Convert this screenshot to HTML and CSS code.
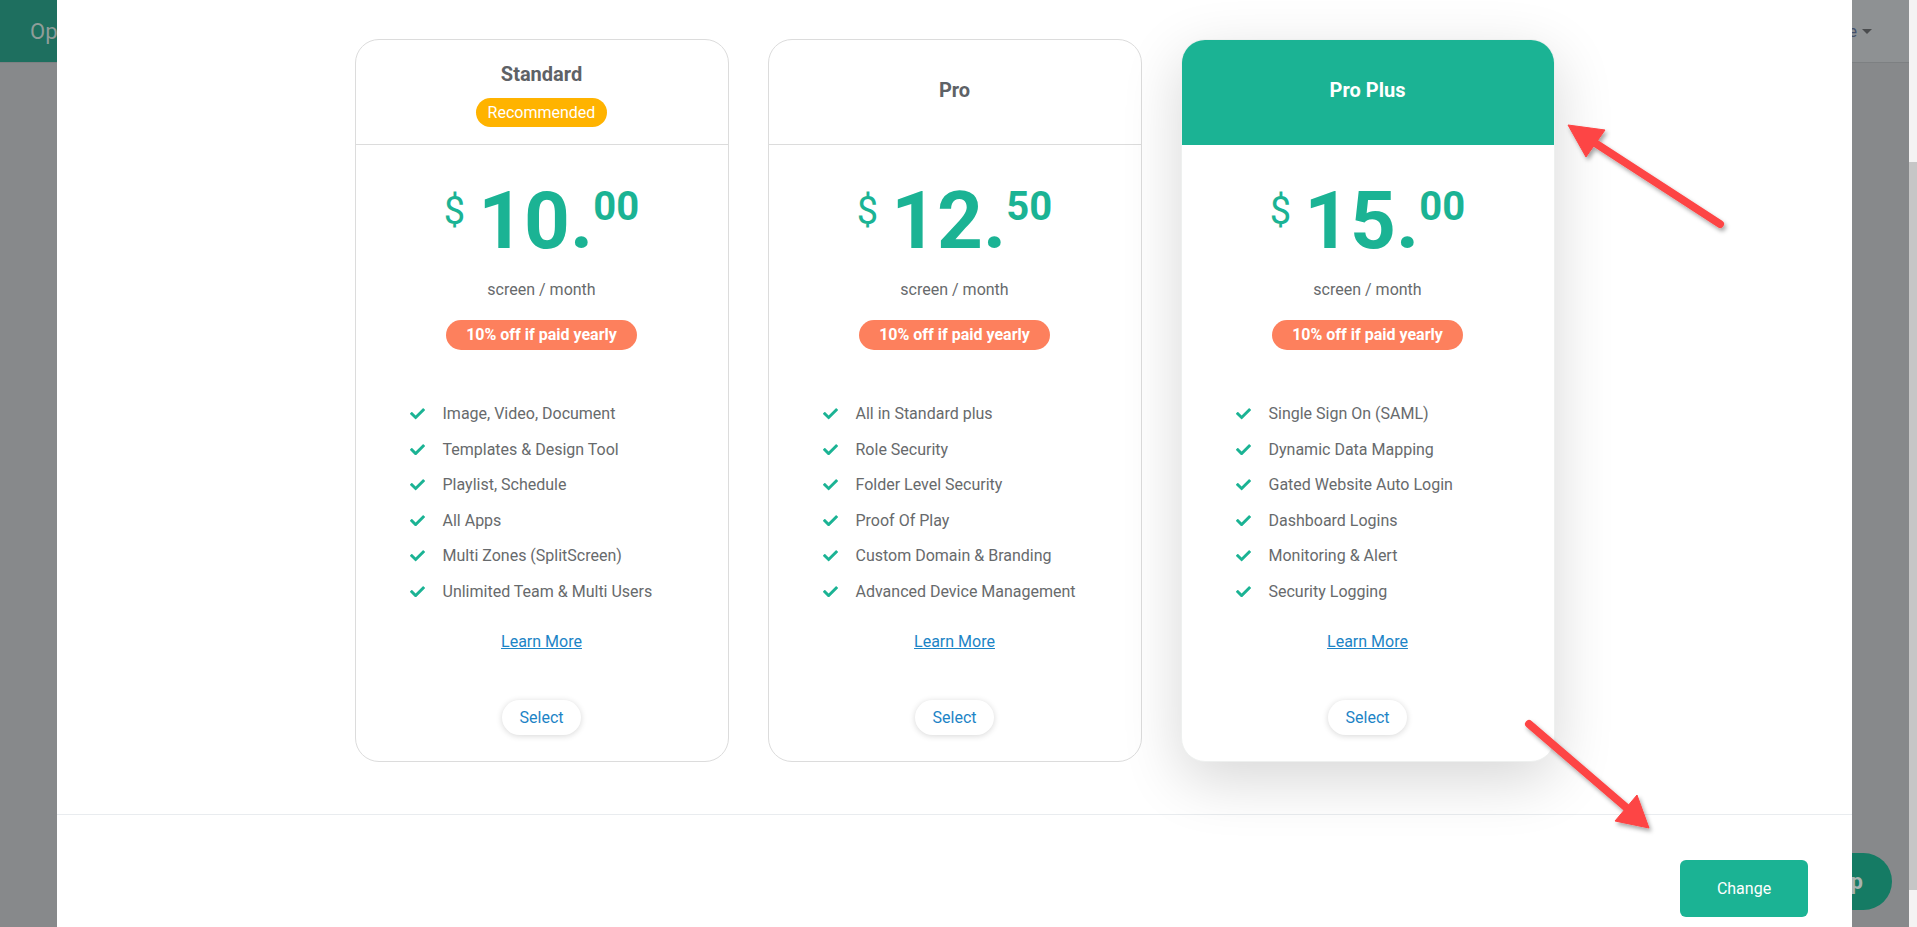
FILE: index.html
```html
<!DOCTYPE html>
<html lang="en">
<head>
<meta charset="utf-8">
<title>Change plan</title>
<link rel="stylesheet" href="styles.css">
</head>
<body>
<div class="window">
  <div class="page">
    <header class="topbar">
      <div class="brand">Open</div>
      <div class="nav-right"><span class="user">Profile</span><span class="caret"></span></div>
    </header>
    <main class="content"></main>
    <button class="help">Help</button>

    <div class="modal">
      <div class="modal-body">
        <div class="card">
          <div class="card-head with-badge">
            <div class="plan-name">Standard</div>
            <span class="rec">Recommended</span>
          </div>
          <div class="price"><span class="cur">$</span><span class="amt">10.</span><span class="cents">00</span></div>
          <div class="per">screen / month</div>
          <div class="off-wrap"><span class="off">10% off if paid yearly</span></div>
          <ul class="features">
            <li><svg class="chk" viewBox="0 64 512 384"><path d="M173.9 439.4l-166.4-166.4c-10-10-10-26.2 0-36.2l36.2-36.2c10-10 26.2-10 36.2 0L192 312.7 432.1 72.6c10-10 26.2-10 36.2 0l36.2 36.2c10 10 10 26.2 0 36.2l-294.4 294.4c-10 10-26.2 10-36.2 0z"/></svg>Image, Video, Document</li>
            <li><svg class="chk" viewBox="0 64 512 384"><path d="M173.9 439.4l-166.4-166.4c-10-10-10-26.2 0-36.2l36.2-36.2c10-10 26.2-10 36.2 0L192 312.7 432.1 72.6c10-10 26.2-10 36.2 0l36.2 36.2c10 10 10 26.2 0 36.2l-294.4 294.4c-10 10-26.2 10-36.2 0z"/></svg>Templates &amp; Design Tool</li>
            <li><svg class="chk" viewBox="0 64 512 384"><path d="M173.9 439.4l-166.4-166.4c-10-10-10-26.2 0-36.2l36.2-36.2c10-10 26.2-10 36.2 0L192 312.7 432.1 72.6c10-10 26.2-10 36.2 0l36.2 36.2c10 10 10 26.2 0 36.2l-294.4 294.4c-10 10-26.2 10-36.2 0z"/></svg>Playlist, Schedule</li>
            <li><svg class="chk" viewBox="0 64 512 384"><path d="M173.9 439.4l-166.4-166.4c-10-10-10-26.2 0-36.2l36.2-36.2c10-10 26.2-10 36.2 0L192 312.7 432.1 72.6c10-10 26.2-10 36.2 0l36.2 36.2c10 10 10 26.2 0 36.2l-294.4 294.4c-10 10-26.2 10-36.2 0z"/></svg>All Apps</li>
            <li><svg class="chk" viewBox="0 64 512 384"><path d="M173.9 439.4l-166.4-166.4c-10-10-10-26.2 0-36.2l36.2-36.2c10-10 26.2-10 36.2 0L192 312.7 432.1 72.6c10-10 26.2-10 36.2 0l36.2 36.2c10 10 10 26.2 0 36.2l-294.4 294.4c-10 10-26.2 10-36.2 0z"/></svg>Multi Zones (SplitScreen)</li>
            <li><svg class="chk" viewBox="0 64 512 384"><path d="M173.9 439.4l-166.4-166.4c-10-10-10-26.2 0-36.2l36.2-36.2c10-10 26.2-10 36.2 0L192 312.7 432.1 72.6c10-10 26.2-10 36.2 0l36.2 36.2c10 10 10 26.2 0 36.2l-294.4 294.4c-10 10-26.2 10-36.2 0z"/></svg>Unlimited Team &amp; Multi Users</li>
          </ul>
          <a class="learn" href="#">Learn More</a>
          <div class="sel-wrap"><button class="select">Select</button></div>
        </div>

        <div class="card">
          <div class="card-head">
            <div class="plan-name">Pro</div>
          </div>
          <div class="price"><span class="cur">$</span><span class="amt">12.</span><span class="cents">50</span></div>
          <div class="per">screen / month</div>
          <div class="off-wrap"><span class="off">10% off if paid yearly</span></div>
          <ul class="features">
            <li><svg class="chk" viewBox="0 64 512 384"><path d="M173.9 439.4l-166.4-166.4c-10-10-10-26.2 0-36.2l36.2-36.2c10-10 26.2-10 36.2 0L192 312.7 432.1 72.6c10-10 26.2-10 36.2 0l36.2 36.2c10 10 10 26.2 0 36.2l-294.4 294.4c-10 10-26.2 10-36.2 0z"/></svg>All in Standard plus</li>
            <li><svg class="chk" viewBox="0 64 512 384"><path d="M173.9 439.4l-166.4-166.4c-10-10-10-26.2 0-36.2l36.2-36.2c10-10 26.2-10 36.2 0L192 312.7 432.1 72.6c10-10 26.2-10 36.2 0l36.2 36.2c10 10 10 26.2 0 36.2l-294.4 294.4c-10 10-26.2 10-36.2 0z"/></svg>Role Security</li>
            <li><svg class="chk" viewBox="0 64 512 384"><path d="M173.9 439.4l-166.4-166.4c-10-10-10-26.2 0-36.2l36.2-36.2c10-10 26.2-10 36.2 0L192 312.7 432.1 72.6c10-10 26.2-10 36.2 0l36.2 36.2c10 10 10 26.2 0 36.2l-294.4 294.4c-10 10-26.2 10-36.2 0z"/></svg>Folder Level Security</li>
            <li><svg class="chk" viewBox="0 64 512 384"><path d="M173.9 439.4l-166.4-166.4c-10-10-10-26.2 0-36.2l36.2-36.2c10-10 26.2-10 36.2 0L192 312.7 432.1 72.6c10-10 26.2-10 36.2 0l36.2 36.2c10 10 10 26.2 0 36.2l-294.4 294.4c-10 10-26.2 10-36.2 0z"/></svg>Proof Of Play</li>
            <li><svg class="chk" viewBox="0 64 512 384"><path d="M173.9 439.4l-166.4-166.4c-10-10-10-26.2 0-36.2l36.2-36.2c10-10 26.2-10 36.2 0L192 312.7 432.1 72.6c10-10 26.2-10 36.2 0l36.2 36.2c10 10 10 26.2 0 36.2l-294.4 294.4c-10 10-26.2 10-36.2 0z"/></svg>Custom Domain &amp; Branding</li>
            <li><svg class="chk" viewBox="0 64 512 384"><path d="M173.9 439.4l-166.4-166.4c-10-10-10-26.2 0-36.2l36.2-36.2c10-10 26.2-10 36.2 0L192 312.7 432.1 72.6c10-10 26.2-10 36.2 0l36.2 36.2c10 10 10 26.2 0 36.2l-294.4 294.4c-10 10-26.2 10-36.2 0z"/></svg>Advanced Device Management</li>
          </ul>
          <a class="learn" href="#">Learn More</a>
          <div class="sel-wrap"><button class="select">Select</button></div>
        </div>

        <div class="card featured">
          <div class="card-head">
            <div class="plan-name">Pro Plus</div>
          </div>
          <div class="price"><span class="cur">$</span><span class="amt">15.</span><span class="cents">00</span></div>
          <div class="per">screen / month</div>
          <div class="off-wrap"><span class="off">10% off if paid yearly</span></div>
          <ul class="features">
            <li><svg class="chk" viewBox="0 64 512 384"><path d="M173.9 439.4l-166.4-166.4c-10-10-10-26.2 0-36.2l36.2-36.2c10-10 26.2-10 36.2 0L192 312.7 432.1 72.6c10-10 26.2-10 36.2 0l36.2 36.2c10 10 10 26.2 0 36.2l-294.4 294.4c-10 10-26.2 10-36.2 0z"/></svg>Single Sign On (SAML)</li>
            <li><svg class="chk" viewBox="0 64 512 384"><path d="M173.9 439.4l-166.4-166.4c-10-10-10-26.2 0-36.2l36.2-36.2c10-10 26.2-10 36.2 0L192 312.7 432.1 72.6c10-10 26.2-10 36.2 0l36.2 36.2c10 10 10 26.2 0 36.2l-294.4 294.4c-10 10-26.2 10-36.2 0z"/></svg>Dynamic Data Mapping</li>
            <li><svg class="chk" viewBox="0 64 512 384"><path d="M173.9 439.4l-166.4-166.4c-10-10-10-26.2 0-36.2l36.2-36.2c10-10 26.2-10 36.2 0L192 312.7 432.1 72.6c10-10 26.2-10 36.2 0l36.2 36.2c10 10 10 26.2 0 36.2l-294.4 294.4c-10 10-26.2 10-36.2 0z"/></svg>Gated Website Auto Login</li>
            <li><svg class="chk" viewBox="0 64 512 384"><path d="M173.9 439.4l-166.4-166.4c-10-10-10-26.2 0-36.2l36.2-36.2c10-10 26.2-10 36.2 0L192 312.7 432.1 72.6c10-10 26.2-10 36.2 0l36.2 36.2c10 10 10 26.2 0 36.2l-294.4 294.4c-10 10-26.2 10-36.2 0z"/></svg>Dashboard Logins</li>
            <li><svg class="chk" viewBox="0 64 512 384"><path d="M173.9 439.4l-166.4-166.4c-10-10-10-26.2 0-36.2l36.2-36.2c10-10 26.2-10 36.2 0L192 312.7 432.1 72.6c10-10 26.2-10 36.2 0l36.2 36.2c10 10 10 26.2 0 36.2l-294.4 294.4c-10 10-26.2 10-36.2 0z"/></svg>Monitoring &amp; Alert</li>
            <li><svg class="chk" viewBox="0 64 512 384"><path d="M173.9 439.4l-166.4-166.4c-10-10-10-26.2 0-36.2l36.2-36.2c10-10 26.2-10 36.2 0L192 312.7 432.1 72.6c10-10 26.2-10 36.2 0l36.2 36.2c10 10 10 26.2 0 36.2l-294.4 294.4c-10 10-26.2 10-36.2 0z"/></svg>Security Logging</li>
          </ul>
          <a class="learn" href="#">Learn More</a>
          <div class="sel-wrap"><button class="select">Select</button></div>
        </div>
      </div>
      <div class="modal-footer">
        <button class="change">Change</button>
      </div>
    </div>

    <svg class="annot" width="1909" height="927" viewBox="0 0 1909 927">
      <defs>
        <filter id="sh" x="-20%" y="-20%" width="140%" height="140%">
          <feDropShadow dx="2" dy="3" stdDeviation="2" flood-color="#000" flood-opacity="0.35"/>
        </filter>
      </defs>
      <g filter="url(#sh)" fill="#fd4444" stroke="#fd4444">
        <line x1="1592" y1="141" x2="1720" y2="224" stroke-width="8" stroke-linecap="round"/>
        <polygon points="1568,125 1605,130 1586,157" stroke-width="1" stroke-linejoin="round"/>
        <line x1="1529" y1="724" x2="1628" y2="809" stroke-width="8" stroke-linecap="round"/>
        <polygon points="1649,828 1615,821 1637,795" stroke-width="1" stroke-linejoin="round"/>
      </g>
    </svg>
  </div>
  <div class="scrollbar"><div class="thumb"></div></div>
</div>
</body>
</html>
```
FILE: styles.css
```css
* { box-sizing: border-box; }
html, body { margin: 0; padding: 0; }
body {
  width: 1917px;
  height: 927px;
  overflow: hidden;
  font-family: Roboto, "Liberation Sans", Arial, sans-serif;
  color: #676a6c;
}
.window {
  display: flex;
  width: 1917px;
  height: 927px;
}
.page {
  position: relative;
  flex: 1;
  height: 927px;
  background: #87898b;
  overflow: hidden;
}
.topbar {
  height: 63px;
  display: flex;
  align-items: center;
  justify-content: space-between;
  background: #8e9193;
  border-bottom: 1px solid #7d8082;
}
.brand {
  height: 62px;
  width: 240px;
  background: #1e6f5f;
  color: #8f9d99;
  font-size: 22px;
  padding: 19px 0 0 30px;
}
.nav-right {
  display: flex;
  align-items: center;
  gap: 5px;
  padding-right: 37px;
  color: #44506a;
  font-size: 16px;
}
.caret {
  width: 0;
  height: 0;
  border-left: 5px solid transparent;
  border-right: 5px solid transparent;
  border-top: 5px solid #4a4c4e;
}
.content { flex: 1; }
.help {
  position: absolute;
  right: 17px;
  top: 853px;
  height: 57px;
  width: 140px;
  border: none;
  border-radius: 29px;
  background: #157b64;
  color: #a9b3b0;
  font-family: Roboto, "Liberation Sans", Arial, sans-serif;
  font-size: 22px;
  font-weight: 700;
  text-align: right;
  padding-right: 29px;
}
.scrollbar {
  width: 8px;
  height: 927px;
  background: #f4f3f3;
  padding-top: 162px;
}
.thumb {
  width: 8px;
  height: 728px;
  background: #c6c6c6;
}

/* modal */
.modal {
  position: absolute;
  left: 57px;
  right: 57px;
  top: 0;
  height: 927px;
  background: #fff;
}
.modal-body {
  display: flex;
  justify-content: center;
  gap: 39px;
  padding: 39px 0 52px;
  border-bottom: 1px solid #e9ecef;
}
.card {
  width: 374px;
  border: 1px solid #dcdcdc;
  border-radius: 24px;
  overflow: hidden;
  background: #fff;
  display: flex;
  flex-direction: column;
  padding-bottom: 26px;
}
.card.featured {
  border-color: #eef0ef;
  box-shadow: 0 18px 60px rgba(0, 0, 0, 0.16);
}
.card-head {
  height: 105px;
  border-bottom: 1px solid #dcdcdc;
  display: flex;
  flex-direction: column;
  align-items: center;
  justify-content: center;
  gap: 12px;
  padding-bottom: 5px;
}
.card-head.with-badge {
  padding-bottom: 0;
  padding-top: 5px;
}
.featured .card-head {
  background: #1bb394;
  border-bottom-color: #1bb394;
}
.plan-name {
  font-size: 20px;
  line-height: 24px;
  font-weight: 700;
  color: #5e6266;
}
.featured .plan-name { color: #fff; }
.rec {
  display: inline-block;
  height: 29px;
  line-height: 29px;
  padding: 0 12px;
  border-radius: 15px;
  background: #ffb300;
  color: #fff;
  font-size: 16px;
}
.price {
  display: flex;
  justify-content: center;
  align-items: flex-start;
  margin-top: 36px;
  color: #1bb394;
  line-height: 1;
}
.cur {
  font-size: 38px;
  margin-top: 11px;
  margin-right: 13px;
}
.amt {
  font-size: 80px;
  font-weight: 700;
}
.cents {
  font-size: 40px;
  font-weight: 700;
  margin-top: 6px;
}
.per {
  margin-top: 17px;
  text-align: center;
  font-size: 16px;
  line-height: 24px;
  color: #676a6c;
}
.off-wrap {
  margin-top: 18px;
  text-align: center;
  height: 30px;
}
.off {
  display: inline-block;
  height: 30px;
  line-height: 30px;
  padding: 0 20px;
  border-radius: 15px;
  background: #fd805d;
  color: #fff;
  font-size: 16px;
  font-weight: 700;
}
.features {
  list-style: none;
  margin: 52px 0 0;
  padding: 0 0 0 54px;
  display: flex;
  flex-direction: column;
  gap: 11.5px;
}
.features li {
  display: flex;
  align-items: center;
  gap: 18px;
  font-size: 16px;
  line-height: 24px;
  color: #676a6c;
}
.chk {
  width: 15px;
  height: 11.5px;
  fill: #1bb394;
  flex: none;
}
.learn {
  margin-top: 26.5px;
  align-self: center;
  font-size: 16px;
  line-height: 24px;
  color: #1c84c6;
  text-decoration: underline;
}
.sel-wrap {
  margin-top: 46px;
  text-align: center;
}
.select {
  height: 35px;
  padding: 0 18px;
  border: none;
  border-radius: 18px;
  background: #fff;
  box-shadow: 0 1px 6px rgba(0, 0, 0, 0.16);
  color: #1c84c6;
  font-family: Roboto, "Liberation Sans", Arial, sans-serif;
  font-size: 16px;
}
.modal-footer {
  display: flex;
  justify-content: flex-end;
  padding: 45px 44px 0 0;
}
.change {
  width: 128px;
  height: 57px;
  border: none;
  border-radius: 6px;
  background: #1bb394;
  color: #fff;
  font-family: Roboto, "Liberation Sans", Arial, sans-serif;
  font-size: 16px;
}
.annot {
  position: absolute;
  left: 0;
  top: 0;
  pointer-events: none;
}
```
